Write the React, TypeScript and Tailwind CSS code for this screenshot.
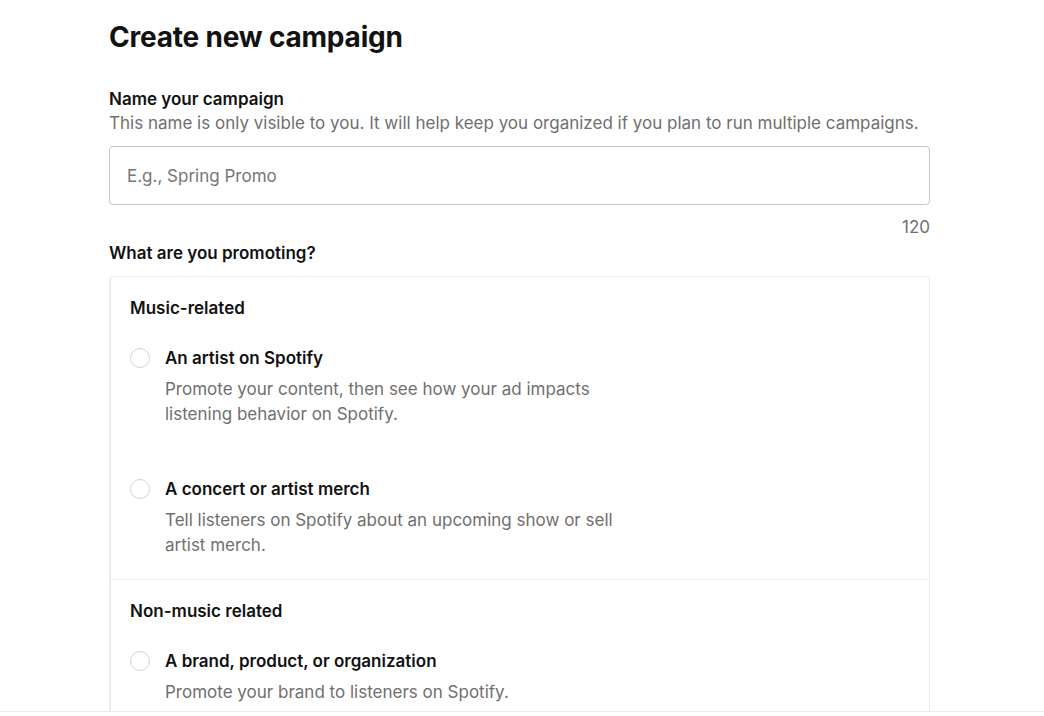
import React, { useState } from "react";

interface Option {
  id: string;
  title: string;
  lines: string[];
}

const musicOptions: Option[] = [
  {
    id: "artist",
    title: "An artist on Spotify",
    lines: ["Promote your content, then see how your ad impacts", "listening behavior on Spotify."],
  },
  {
    id: "concert",
    title: "A concert or artist merch",
    lines: ["Tell listeners on Spotify about an upcoming show or sell", "artist merch."],
  },
];

const otherOptions: Option[] = [
  {
    id: "brand",
    title: "A brand, product, or organization",
    lines: ["Promote your brand to listeners on Spotify."],
  },
];

function RadioRow({
  option,
  checked,
  onSelect,
  gapAfter,
}: {
  option: Option;
  checked: boolean;
  onSelect: () => void;
  gapAfter?: boolean;
}) {
  return (
    <label className={`flex cursor-pointer items-start gap-[15px] ${gapAfter ? "mb-[51px]" : ""}`}>
      <span
        className={`mt-[1px] h-[20px] w-[20px] shrink-0 rounded-full border ${
          checked ? "border-[6px] border-[#1ed760]" : "border-[#d4d4d4]"
        }`}
        onClick={onSelect}
      />
      <div onClick={onSelect}>
        <div className="text-[17px] font-semibold leading-[22px] text-[#121212]">{option.title}</div>
        <div className="mt-[8px] text-[17px] leading-[25px] text-[#6f6f6f]">
          {option.lines.map((l) => (
            <div key={l}>{l}</div>
          ))}
        </div>
      </div>
    </label>
  );
}

export default function App() {
  const [name, setName] = useState("");
  const [selected, setSelected] = useState<string>("");

  return (
    <div className="relative h-[716px] w-[1044px] overflow-hidden bg-white font-['Inter',sans-serif] text-[#121212]">
      <div className="ml-[109px] w-[821px]">
        <h1 className="pt-[20px] text-[28px] font-bold leading-[34px] tracking-[-0.2px]">Create new campaign</h1>

        <div className="mt-[34px] text-[17px] font-semibold leading-[22px]">Name your campaign</div>
        <p className="text-[17px] leading-[26px] text-[#6f6f6f]">
          This name is only visible to you. It will help keep you organized if you plan to run multiple campaigns.
        </p>

        <input
          value={name}
          onChange={(e) => setName(e.target.value.slice(0, 120))}
          placeholder="E.g., Spring Promo"
          className="mt-[10px] h-[59px] w-full rounded-[4px] border border-[#c4c4c4] px-[17px] text-[17px] text-[#121212] outline-none placeholder:text-[#767676]"
        />
        <div className="mt-[11px] text-right text-[17px] leading-[22px] text-[#6f6f6f]">{120 - name.length}</div>

        <div className="mt-[4px] text-[17px] font-semibold leading-[22px]">What are you promoting?</div>

        <div className="mt-[12px] rounded-[4px] border border-[#ececec] border-l-[2px]">
          <div className="px-[19px] pb-[21px] pt-[20px]">
            <div className="mb-[28px] text-[17px] font-semibold leading-[22px]">Music-related</div>
            {musicOptions.map((o, i) => (
              <RadioRow
                key={o.id}
                option={o}
                checked={selected === o.id}
                onSelect={() => setSelected(o.id)}
                gapAfter={i === 0}
              />
            ))}
          </div>
          <div className="border-t border-[#ececec] px-[19px] pb-[24px] pt-[20px]">
            <div className="mb-[28px] text-[17px] font-semibold leading-[22px]">Non-music related</div>
            {otherOptions.map((o) => (
              <RadioRow key={o.id} option={o} checked={selected === o.id} onSelect={() => setSelected(o.id)} />
            ))}
          </div>
        </div>
      </div>

      <div className="absolute bottom-0 left-0 h-[5px] w-full border-t border-[#ececec] bg-white" />
    </div>
  );
}
